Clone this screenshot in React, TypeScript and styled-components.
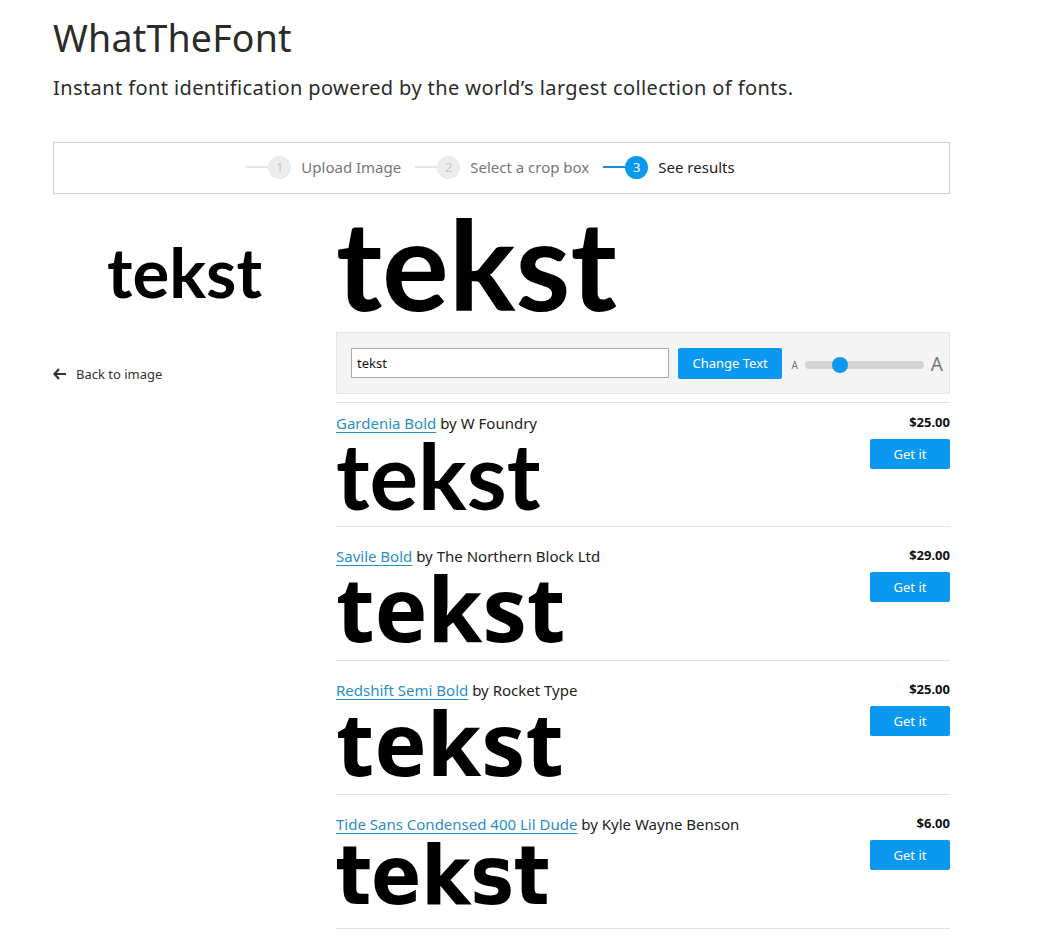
import React from "react";
import styled, { createGlobalStyle } from "styled-components";

const Global = createGlobalStyle`
  html, body { margin: 0; padding: 0; background: #fff; }
  body { font-family: "Noto Sans", "Open Sans", sans-serif; color: #222; }
  * { box-sizing: border-box; }
`;

const BLUE = "#0b98f0";

const Page = styled.div`
  width: 1051px;
  padding: 14px 0 0 53px;
`;

const Title = styled.h1`
  margin: 0;
  font-size: 37.5px;
  line-height: 48px;
  font-weight: 400;
  color: #2b2b2b;
  letter-spacing: 0.2px;
`;

const Subtitle = styled.p`
  margin: 12px 0 0;
  font-size: 20px;
  line-height: 28px;
  letter-spacing: 0.4px;
  color: #2b2b2b;
`;

const Stepper = styled.div`
  margin-top: 40px;
  width: 897px;
  height: 52px;
  border: 1px solid #cfcfcf;
  display: flex;
  align-items: center;
  justify-content: center;
  padding-right: 22px;
  padding-bottom: 2px;
  gap: 14px;
`;

const Step = styled.div`
  display: flex;
  align-items: center;
`;

const StepLine = styled.span<{ $active?: boolean }>`
  width: 22px;
  height: 2px;
  background: ${(p) => (p.$active ? "#1f8ad6" : "#e6e6e6")};
`;

const StepNum = styled.span<{ $active?: boolean }>`
  width: 23px;
  height: 23px;
  border-radius: 50%;
  background: ${(p) => (p.$active ? BLUE : "#ececec")};
  color: ${(p) => (p.$active ? "#fff" : "#c4c4c4")};
  font-size: 13px;
  display: flex;
  align-items: center;
  justify-content: center;
  margin-right: 10px;
`;

const StepLabel = styled.span<{ $active?: boolean }>`
  font-size: 15px;
  color: ${(p) => (p.$active ? "#222" : "#777")};
`;

const Main = styled.div`
  display: grid;
  grid-template-columns: 283px 614px;
`;

const LeftCol = styled.div`
  display: flex;
  flex-direction: column;
`;

const Sample = styled.div`
  font-family: "Lato", sans-serif;
  font-weight: 700;
  font-size: 69px;
  line-height: 80px;
  color: #000;
  padding: 38px 0 0 54px;
`;

const BackLink = styled.a`
  margin-top: 53px;
  display: flex;
  align-items: center;
  gap: 9px;
  font-size: 13px;
  color: #333;
  text-decoration: none;
`;

const RightCol = styled.div`
  display: flex;
  flex-direction: column;
`;

const BigPreview = styled.div`
  font-family: "Lato", sans-serif;
  font-weight: 700;
  font-size: 125px;
  line-height: 138px;
  color: #000;
  height: 138px;
`;

const Controls = styled.div`
  height: 62px;
  background: #f4f4f4;
  border: 1px solid #e4e4e4;
  display: flex;
  align-items: center;
  padding: 0 6px 0 14px;
`;

const TextInput = styled.input`
  width: 319px;
  height: 30px;
  border: 1px solid #a9a9a9;
  padding: 0 5px;
  font-family: "Noto Sans", sans-serif;
  font-size: 13px;
  color: #111;
  background: #fff;
  outline: none;
`;

const BlueButton = styled.button<{ $w: number; $h: number; $ml?: number }>`
  width: ${(p) => p.$w}px;
  height: ${(p) => p.$h}px;
  margin-left: ${(p) => p.$ml || 0}px;
  background: ${BLUE};
  color: #fff;
  border: none;
  border-radius: 2px;
  font-family: "Noto Sans", sans-serif;
  font-size: 13px;
  padding: 0;
`;

const SizeA = styled.span<{ $size: number }>`
  font-size: ${(p) => p.$size}px;
  color: #777;
  line-height: 1;
`;

const SliderTrack = styled.div`
  position: relative;
  width: 119px;
  height: 8px;
  border-radius: 4px;
  background: #d3d3d3;
  margin: 0 7px;
`;

const Thumb = styled.span`
  position: absolute;
  left: 27px;
  top: -4px;
  width: 16px;
  height: 16px;
  border-radius: 50%;
  background: ${BLUE};
`;

const ControlsRight = styled.div`
  display: flex;
  align-items: center;
  margin-left: 9px;
  padding-top: 3px;
`;

const Results = styled.div`
  margin-top: 8px;
  border-top: 1px solid #e2e2e2;
`;

const ResultRow = styled.div<{ $first?: boolean }>`
  height: ${(p) => (p.$first ? 124 : 134)}px;
  border-bottom: 1px solid #e2e2e2;
  display: flex;
  justify-content: space-between;
  padding-top: ${(p) => (p.$first ? 10 : 19)}px;
`;

const ResultInfo = styled.div`
  display: flex;
  flex-direction: column;
`;

const Credit = styled.div`
  font-size: 15px;
  line-height: 20px;
  color: #222;
`;

const FontLink = styled.a`
  color: #2a8fc4;
  text-decoration: underline;
  text-underline-offset: 3px;
`;

const Preview = styled.div<{ $family: string; $size: number; $weight: number; $stretch?: string }>`
  font-family: ${(p) => p.$family};
  font-size: ${(p) => p.$size}px;
  font-weight: ${(p) => p.$weight};
  font-stretch: ${(p) => p.$stretch || "normal"};
  line-height: 92px;
  color: #000;
  margin-top: -4px;
`;

const Buy = styled.div`
  display: flex;
  flex-direction: column;
  align-items: flex-end;
  gap: 8px;
`;

const Price = styled.div`
  font-size: 13px;
  line-height: 18px;
  font-weight: 700;
  color: #111;
`;

const results = [
  { name: "Gardenia Bold", by: "W Foundry", price: "$25.00", family: "'Lato', sans-serif", size: 91, weight: 700 },
  { name: "Savile Bold", by: "The Northern Block Ltd", price: "$29.00", family: "'Open Sans', sans-serif", size: 89, weight: 700 },
  { name: "Redshift Semi Bold", by: "Rocket Type", price: "$25.00", family: "'Noto Sans', sans-serif", size: 88, weight: 700 },
  { name: "Tide Sans Condensed 400 Lil Dude", by: "Kyle Wayne Benson", price: "$6.00", family: "'DejaVu Sans', sans-serif", size: 82, weight: 700, stretch: "condensed" },
];

export default function App() {
  return (
    <Page>
      <Global />
      <Title>WhatTheFont</Title>
      <Subtitle>Instant font identification powered by the world’s largest collection of fonts.</Subtitle>
      <Stepper>
        <Step>
          <StepLine />
          <StepNum>1</StepNum>
          <StepLabel>Upload Image</StepLabel>
        </Step>
        <Step>
          <StepLine />
          <StepNum>2</StepNum>
          <StepLabel>Select a crop box</StepLabel>
        </Step>
        <Step>
          <StepLine $active />
          <StepNum $active>3</StepNum>
          <StepLabel $active>See results</StepLabel>
        </Step>
      </Stepper>
      <Main>
        <LeftCol>
          <Sample>tekst</Sample>
          <BackLink href="#">
            <svg width="14" height="12" viewBox="0 0 14 12">
              <path d="M6 1 L1.5 6 L6 11 M1.5 6 H13" stroke="#333" strokeWidth="2.2" fill="none" />
            </svg>
            Back to image
          </BackLink>
        </LeftCol>
        <RightCol>
          <BigPreview>tekst</BigPreview>
          <Controls>
            <TextInput defaultValue="tekst" />
            <BlueButton $w={105} $h={31} $ml={9}>Change Text</BlueButton>
            <ControlsRight>
              <SizeA $size={10}>A</SizeA>
              <SliderTrack>
                <Thumb />
              </SliderTrack>
              <SizeA $size={19}>A</SizeA>
            </ControlsRight>
          </Controls>
          <Results>
            {results.map((r, i) => (
              <ResultRow key={r.name} $first={i === 0}>
                <ResultInfo>
                  <Credit>
                    <FontLink href="#">{r.name}</FontLink> by {r.by}
                  </Credit>
                  <Preview $family={r.family} $size={r.size} $weight={r.weight} $stretch={r.stretch}>
                    tekst
                  </Preview>
                </ResultInfo>
                <Buy>
                  <Price>{r.price}</Price>
                  <BlueButton $w={80} $h={30}>Get it</BlueButton>
                </Buy>
              </ResultRow>
            ))}
          </Results>
        </RightCol>
      </Main>
    </Page>
  );
}
